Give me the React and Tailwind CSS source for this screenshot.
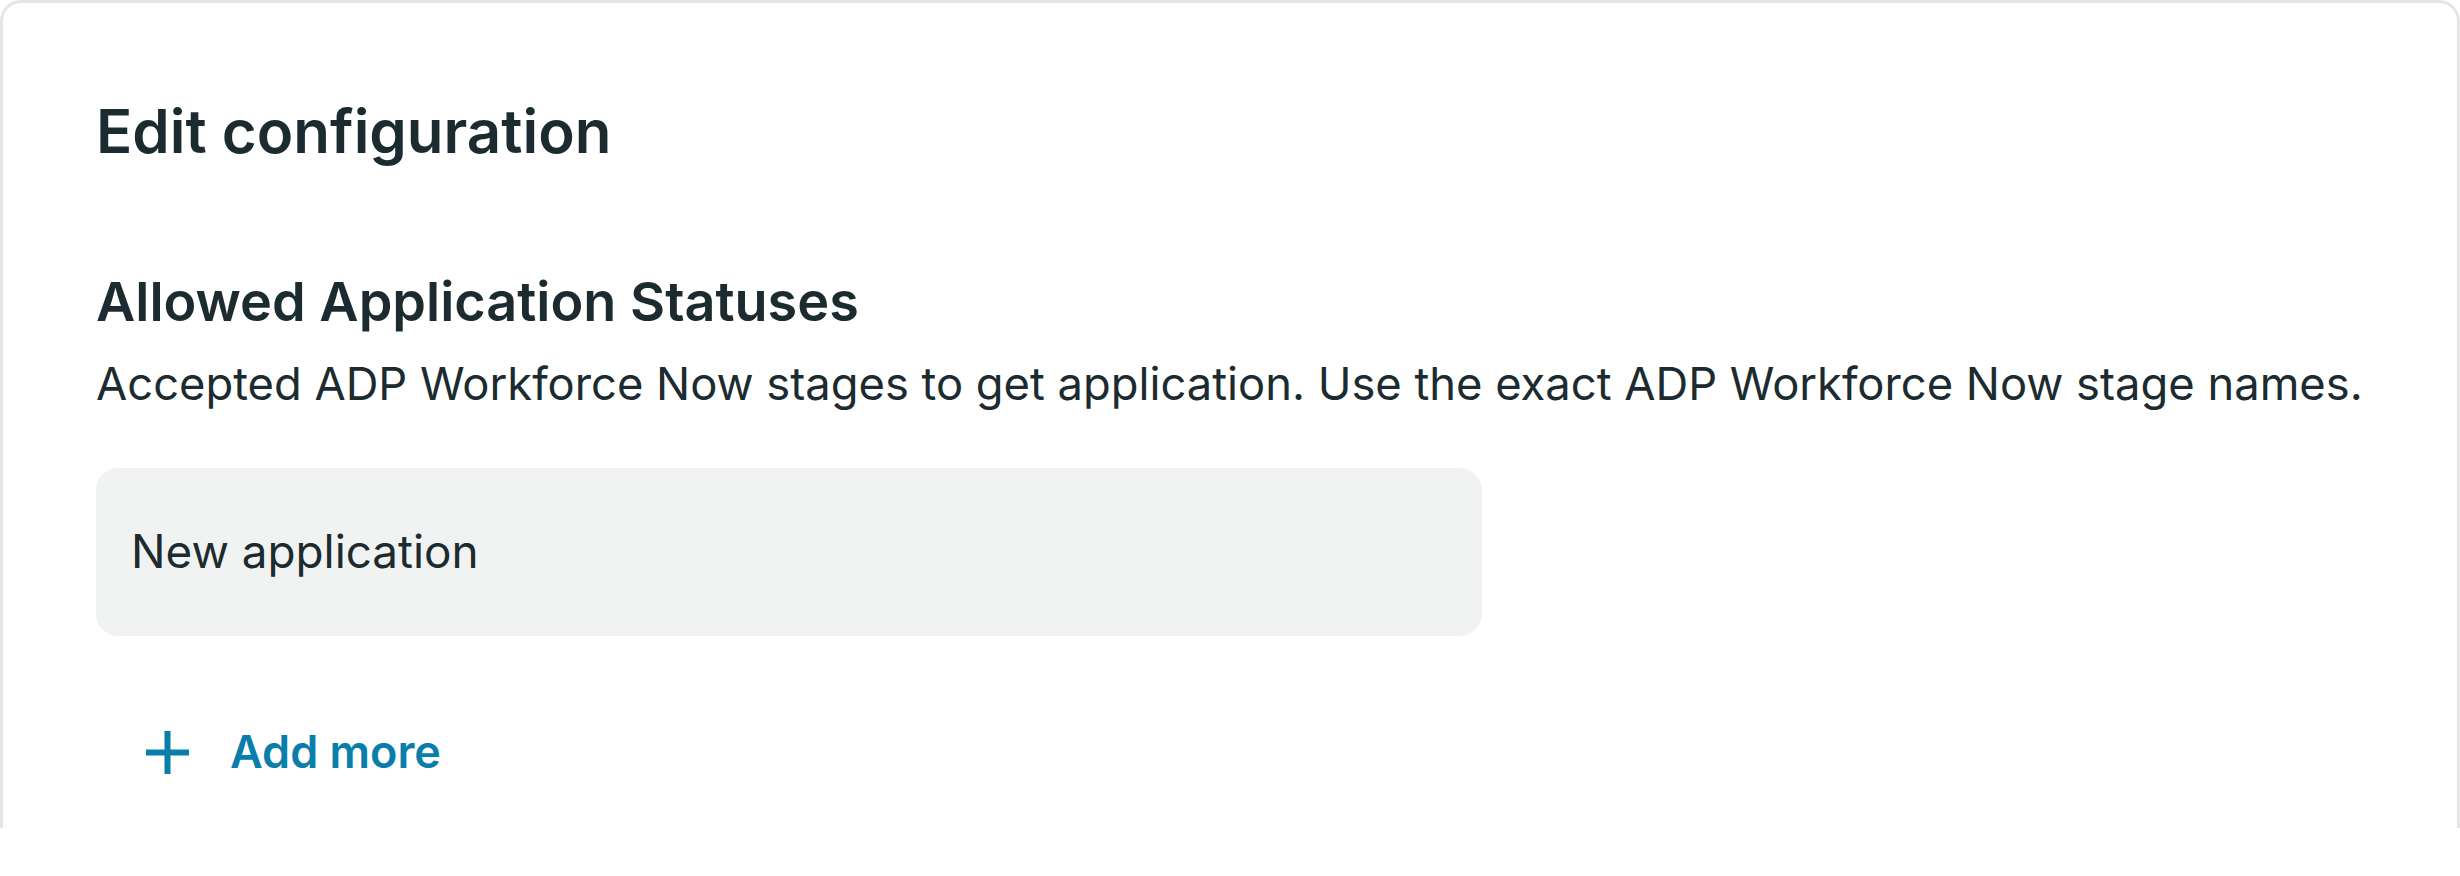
import React from "react";

function PlusIcon() {
  return (
    <svg width="43" height="43" viewBox="0 0 43 43" fill="none" aria-hidden="true">
      <path d="M21.5 0V43M0 21.5H43" stroke="#0a7eaa" strokeWidth="6" />
    </svg>
  );
}

export default function App() {
  return (
    <div className="w-[2460px] h-[876px] bg-white" style={{ fontFamily: "Inter, 'Noto Sans', sans-serif" }}>
      <div className="h-[828px] border-x-[3px] border-t-[3px] border-b-0 border-[#e4e6e5] rounded-t-[21px] pl-[93px] pt-[92px] text-[#1b2b2f]">
        <h1 className="text-[60px] leading-[72px] font-semibold">Edit configuration</h1>
        <h2 className="mt-[102px] text-[54px] leading-[66px] font-semibold">Allowed Application Statuses</h2>
        <p className="mt-[21px] text-[45.3px] leading-[56px]">
          Accepted ADP Workforce Now stages to get application. Use the exact ADP Workforce Now stage names.
        </p>
        <div className="mt-[56px] w-[1386px] h-[168px] rounded-[22px] bg-[#f1f3f2] flex items-center pl-[35px]">
          <span className="text-[45.8px] leading-[56px]">New application</span>
        </div>
        <button className="mt-[88px] ml-[50px] flex items-center gap-[41px] text-[#0a7eaa]">
          <PlusIcon />
          <span className="text-[45px] leading-[56px] font-semibold">Add more</span>
        </button>
      </div>
    </div>
  );
}
